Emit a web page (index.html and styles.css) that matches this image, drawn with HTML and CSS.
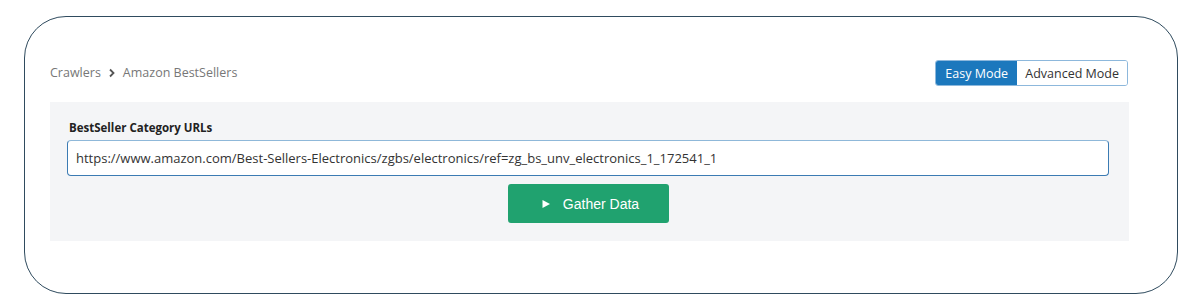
FILE: index.html
```html
<!DOCTYPE html>
<html>
<head>
    <title>Amazon BestSellers - Crawlers</title>
    <link rel="stylesheet" href="styles.css">
</head>
<body>
    <div class="frame">
        <div class="topbar">
            <div class="crumbs">
                <span>Crawlers</span>
                <svg class="chev" width="8" height="10" viewBox="0 0 8 10"><path d="M2 1.5 L5.5 5 L2 8.5" fill="none" stroke="#555" stroke-width="1.8"/></svg>
                <span>Amazon BestSellers</span>
            </div>
            <div class="modes">
                <button class="mode active">Easy Mode</button>
                <button class="mode">Advanced Mode</button>
            </div>
        </div>
        <div class="panel">
            <label for="urls">BestSeller Category URLs</label>
            <input type="text" id="urls" value="https://www.amazon.com/Best-Sellers-Electronics/zgbs/electronics/ref=zg_bs_unv_electronics_1_172541_1">
            <div class="actions">
                <button class="gather">
                    <svg width="10" height="10" viewBox="0 0 10 10"><path d="M1.5 1 L9 5 L1.5 9 Z" fill="#fff"/></svg>
                    Gather Data
                </button>
            </div>
        </div>
    </div>
</body>
</html>
```

FILE: styles.css
```css
body {
    margin: 0;
    padding: 16px 0 0 24px;
    background-color: #fff;
    font-family: "Open Sans", Arial, sans-serif;
    color: #333;
}
.frame {
    width: 1154px;
    height: 278px;
    box-sizing: border-box;
    border: 1px solid #2f4b5e;
    border-radius: 42px;
    padding: 42px 48px 0 25px;
}
.topbar {
    display: flex;
    justify-content: space-between;
    align-items: center;
    height: 28px;
    margin-bottom: 15px;
}
.crumbs {
    display: flex;
    align-items: center;
    gap: 6px;
    font-size: 12.5px;
    color: #777;
    padding-bottom: 1px;
}
.chev {
    margin: 0 1px 0 1px;
}
.modes {
    display: flex;
    border: 1px solid #8db8dc;
    border-radius: 3px;
    overflow: hidden;
    margin-right: 1px;
}
.mode {
    font-family: "Open Sans", Arial, sans-serif;
    font-size: 12.5px;
    height: 24px;
    border: none;
    background-color: #fff;
    color: #333;
    padding: 0 8px;
    cursor: pointer;
}
.mode.active {
    background-color: #1c78bd;
    color: #fff;
    width: 81px;
}
.panel {
    background-color: #f4f5f7;
    height: 139px;
    box-sizing: border-box;
    padding: 18px 20px 0 17px;
}
.panel label {
    display: block;
    font-size: 11.5px;
    font-weight: bold;
    color: #222;
    padding-left: 2px;
    margin-bottom: 5px;
}
.panel input {
    display: block;
    width: 100%;
    height: 36px;
    box-sizing: border-box;
    border: 1px solid #3b7bb3;
    border-top-color: #8fb8d9;
    border-radius: 4px;
    padding: 0 8px;
    font-family: "Open Sans", Arial, sans-serif;
    font-size: 13px;
    color: #333;
    background-color: #fff;
}
.actions {
    display: flex;
    justify-content: center;
    margin-top: 8px;
    padding-left: 1px;
}
.gather {
    display: flex;
    align-items: center;
    justify-content: center;
    gap: 12px;
    width: 161px;
    height: 39px;
    border: none;
    border-radius: 3px;
    background-color: #20a26f;
    color: #fff;
    font-family: "Liberation Sans", Arial, sans-serif;
    font-size: 14px;
    cursor: pointer;
    padding: 0 0 0 3px;
}
```
